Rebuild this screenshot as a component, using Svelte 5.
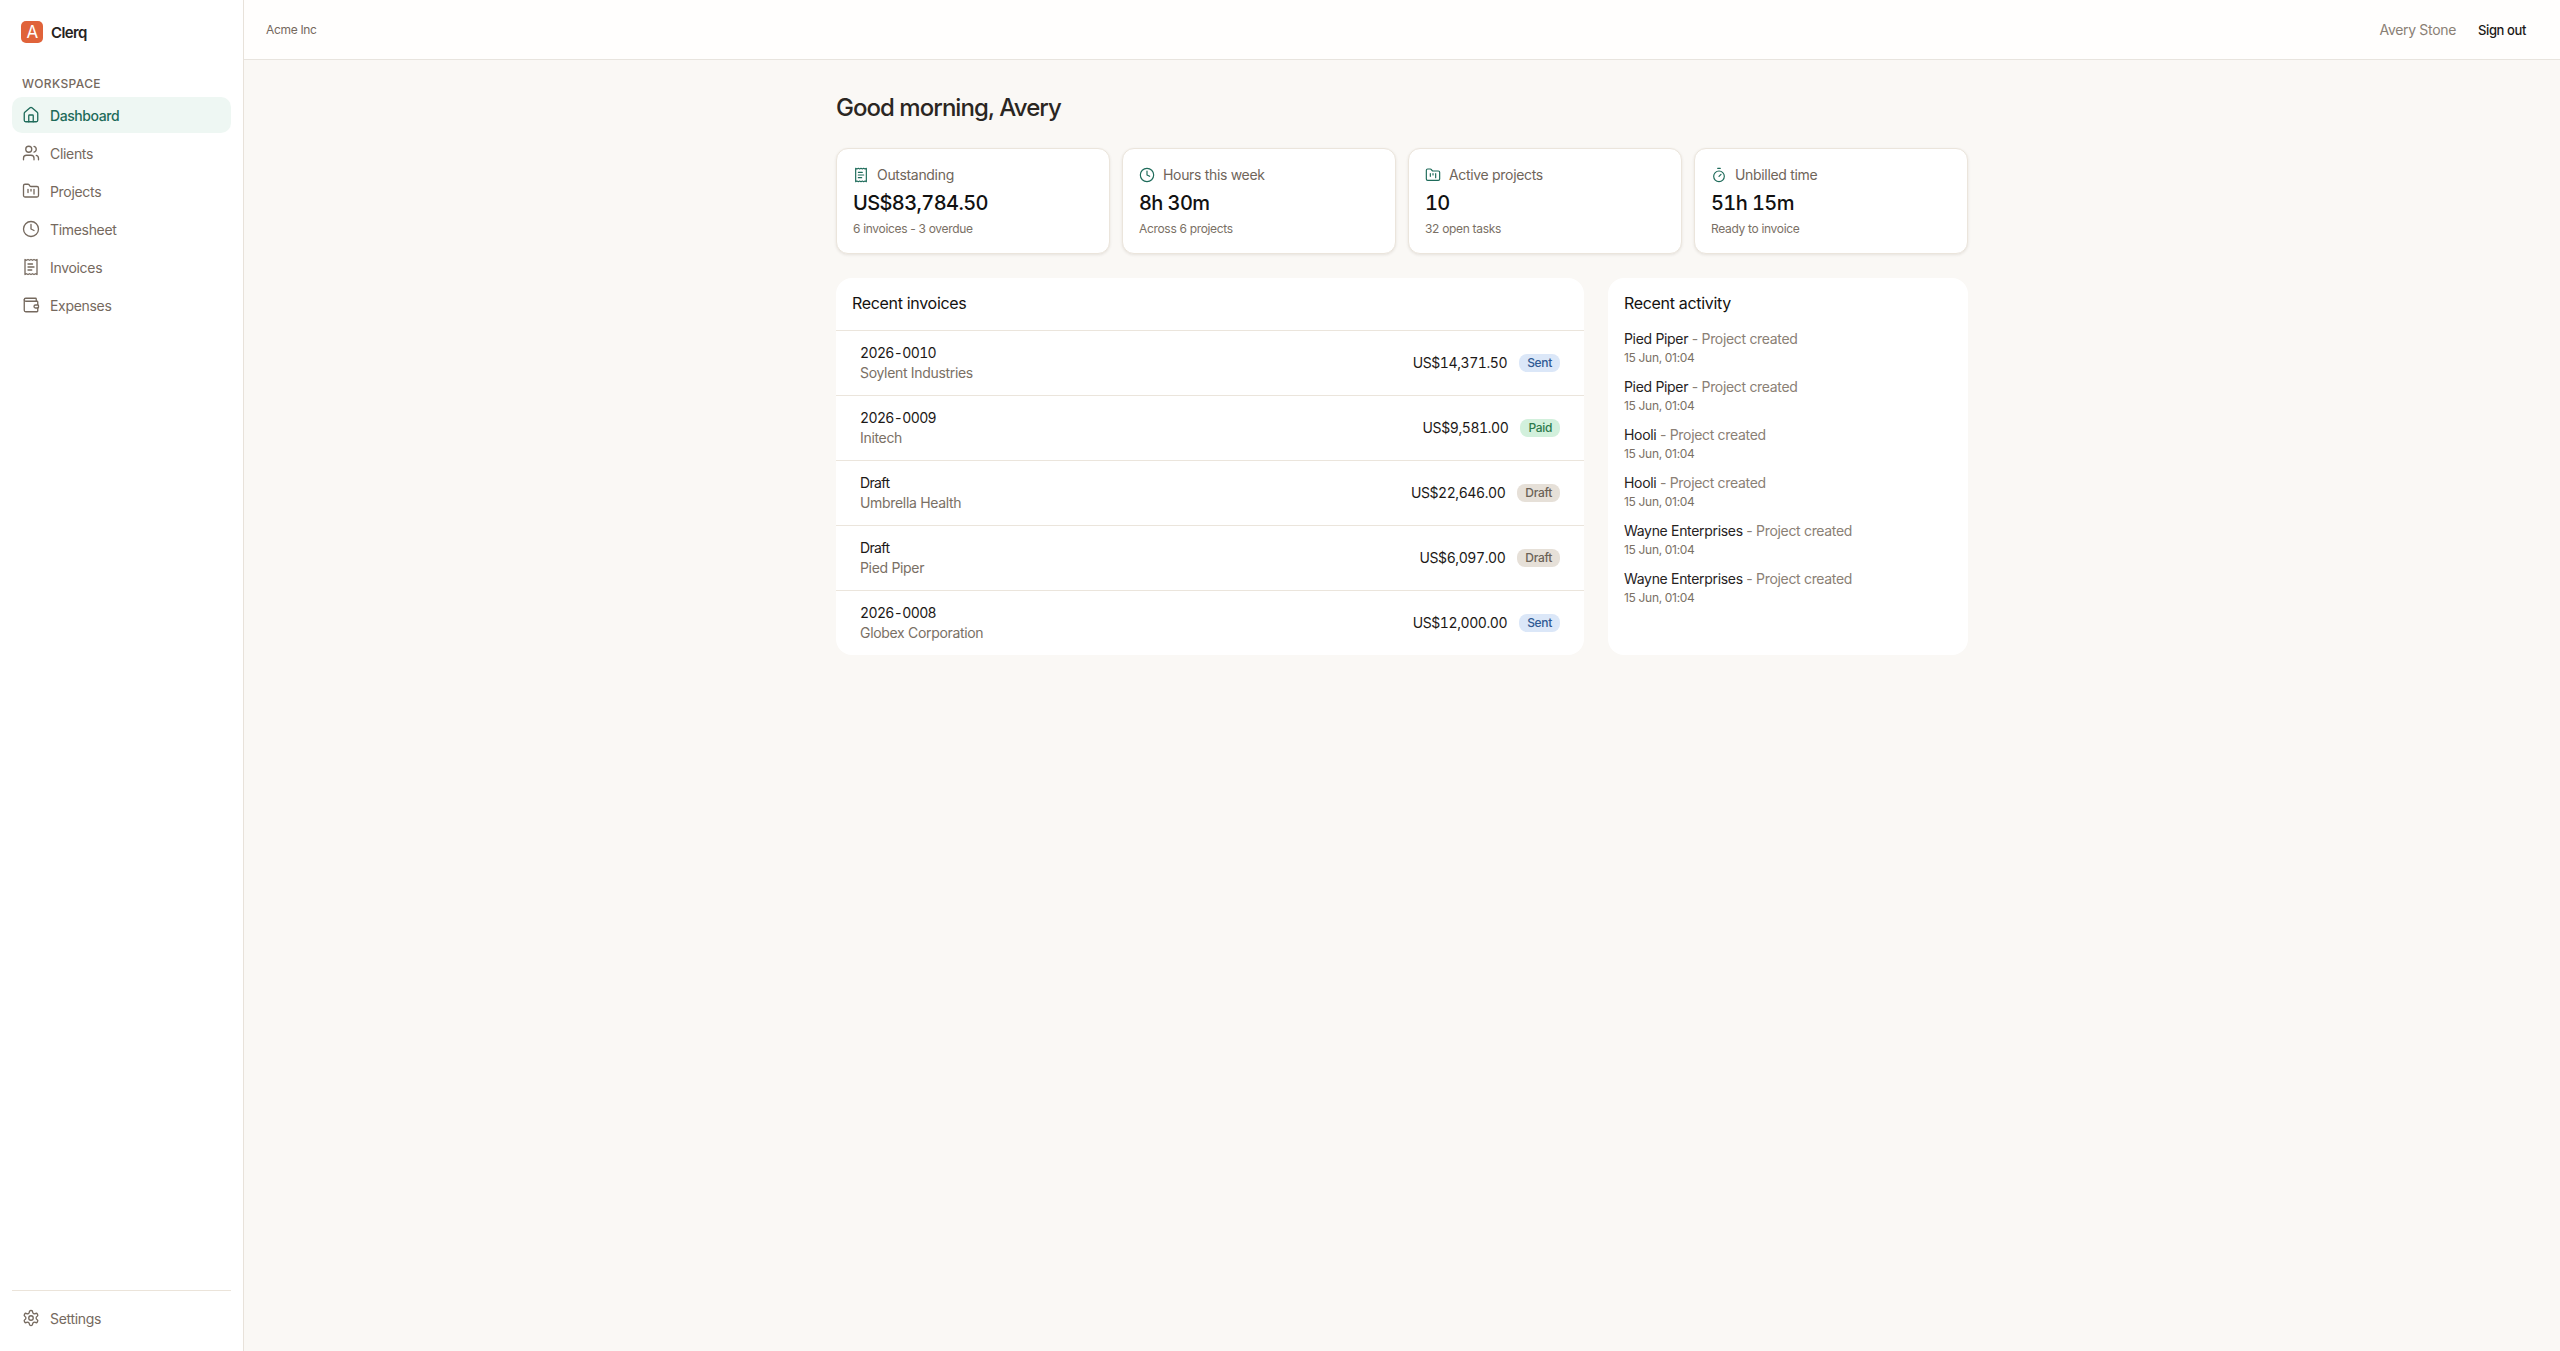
<script lang="ts">
  const icons: Record<string, string> = {
    house: '<path d="M15 21v-8a1 1 0 0 0-1-1h-4a1 1 0 0 0-1 1v8"/><path d="M3 10a2 2 0 0 1 .709-1.528l7-5.999a2 2 0 0 1 2.582 0l7 5.999A2 2 0 0 1 21 10v9a2 2 0 0 1-2 2H5a2 2 0 0 1-2-2z"/>',
    users: '<path d="M16 21v-2a4 4 0 0 0-4-4H6a4 4 0 0 0-4 4v2"/><path d="M16 3.128a4 4 0 0 1 0 7.744"/><path d="M22 21v-2a4 4 0 0 0-3-3.87"/><circle cx="9" cy="7" r="4"/>',
    folder: '<path d="M4 20h16a2 2 0 0 0 2-2V8a2 2 0 0 0-2-2h-7.93a2 2 0 0 1-1.66-.9l-.82-1.2A2 2 0 0 0 7.93 3H4a2 2 0 0 0-2 2v13c0 1.1.9 2 2 2Z"/><path d="M8 10v4"/><path d="M12 10v2"/><path d="M16 10v6"/>',
    clock: '<circle cx="12" cy="12" r="10"/><path d="M12 6v6l4 2"/>',
    receipt: '<path d="M4 2v20l2-1 2 1 2-1 2 1 2-1 2 1 2-1 2 1V2l-2 1-2-1-2 1-2-1-2 1-2-1-2 1Z"/><path d="M14 8H8"/><path d="M16 12H8"/><path d="M13 16H8"/>',
    wallet: '<path d="M19 7V4a1 1 0 0 0-1-1H5a2 2 0 0 0 0 4h15a1 1 0 0 1 1 1v4h-3a2 2 0 0 0 0 4h3a1 1 0 0 0 1-1v-2a1 1 0 0 0-1-1"/><path d="M3 5v14a2 2 0 0 0 2 2h15a1 1 0 0 0 1-1v-4"/>',
    timer: '<line x1="10" x2="14" y1="2" y2="2"/><line x1="12" x2="15" y1="14" y2="11"/><circle cx="12" cy="14" r="8"/>',
    settings: '<path d="M12.22 2h-.44a2 2 0 0 0-2 2v.18a2 2 0 0 1-1 1.73l-.43.25a2 2 0 0 1-2 0l-.15-.08a2 2 0 0 0-2.73.73l-.22.38a2 2 0 0 0 .73 2.73l.15.1a2 2 0 0 1 1 1.72v.51a2 2 0 0 1-1 1.74l-.15.09a2 2 0 0 0-.73 2.73l.22.38a2 2 0 0 0 2.73.73l.15-.08a2 2 0 0 1 2 0l.43.25a2 2 0 0 1 1 1.73V20a2 2 0 0 0 2 2h.44a2 2 0 0 0 2-2v-.18a2 2 0 0 1 1-1.73l.43-.25a2 2 0 0 1 2 0l.15.08a2 2 0 0 0 2.73-.73l.22-.39a2 2 0 0 0-.73-2.73l-.15-.08a2 2 0 0 1-1-1.74v-.5a2 2 0 0 1 1-1.74l.15-.09a2 2 0 0 0 .73-2.73l-.22-.38a2 2 0 0 0-2.73-.73l-.15.08a2 2 0 0 1-2 0l-.43-.25a2 2 0 0 1-1-1.73V4a2 2 0 0 0-2-2z"/><circle cx="12" cy="12" r="3"/>'
  };

  const nav = [
    { label: "Dashboard", icon: "house", active: true },
    { label: "Clients", icon: "users" },
    { label: "Projects", icon: "folder" },
    { label: "Timesheet", icon: "clock" },
    { label: "Invoices", icon: "receipt" },
    { label: "Expenses", icon: "wallet" }
  ];

  const stats = [
    { label: "Outstanding", icon: "receipt", value: "US$83,784.50", sub: "6 invoices - 3 overdue" },
    { label: "Hours this week", icon: "clock", value: "8h 30m", sub: "Across 6 projects" },
    { label: "Active projects", icon: "folder", value: "10", sub: "32 open tasks" },
    { label: "Unbilled time", icon: "timer", value: "51h 15m", sub: "Ready to invoice" }
  ];

  const invoices = [
    { number: "2026-0010", client: "Soylent Industries", amount: "US$14,371.50", status: "Sent" },
    { number: "2026-0009", client: "Initech", amount: "US$9,581.00", status: "Paid" },
    { number: "Draft", client: "Umbrella Health", amount: "US$22,646.00", status: "Draft" },
    { number: "Draft", client: "Pied Piper", amount: "US$6,097.00", status: "Draft" },
    { number: "2026-0008", client: "Globex Corporation", amount: "US$12,000.00", status: "Sent" }
  ];

  const activity = ["Pied Piper", "Pied Piper", "Hooli", "Hooli", "Wayne Enterprises", "Wayne Enterprises"];
</script>

{#snippet icon(name: string, size: number)}
  <svg width={size} height={size} viewBox="0 0 24 24" fill="none" stroke="currentColor" stroke-width="1.75" stroke-linecap="round" stroke-linejoin="round">{@html icons[name]}</svg>
{/snippet}

<div class="shell">
  <aside class="sidebar">
    <div class="brand">
      <div class="logo">A</div>
      <span>Clerq</span>
    </div>
    <div class="section">Workspace</div>
    <nav>
      {#each nav as item}
        <div class="nav-item" class:active={item.active}>
          {@render icon(item.icon, 18)}
          <span>{item.label}</span>
        </div>
      {/each}
    </nav>
    <div class="sidebar-foot">
      <div class="nav-item">
        {@render icon("settings", 18)}
        <span>Settings</span>
      </div>
    </div>
  </aside>

  <div class="body">
    <header class="topbar">
      <span class="org">Acme Inc</span>
      <div class="user">
        <span class="name">Avery Stone</span>
        <span class="signout">Sign out</span>
      </div>
    </header>

    <main>
      <div class="content">
        <h1>Good morning, Avery</h1>

        <div class="stats">
          {#each stats as stat}
            <div class="stat">
              <div class="stat-label">
                {@render icon(stat.icon, 16)}
                <span>{stat.label}</span>
              </div>
              <div class="stat-value">{stat.value}</div>
              <div class="stat-sub">{stat.sub}</div>
            </div>
          {/each}
        </div>

        <div class="panels">
          <section class="panel">
            <h2 class="invoices-title">Recent invoices</h2>
            {#each invoices as inv}
              <div class="row">
                <div>
                  <div class="inv-number">{inv.number}</div>
                  <div class="inv-client">{inv.client}</div>
                </div>
                <div class="inv-right">
                  <span class="amount">{inv.amount}</span>
                  <span class="badge {inv.status.toLowerCase()}">{inv.status}</span>
                </div>
              </div>
            {/each}
          </section>

          <section class="panel activity">
            <h2>Recent activity</h2>
            <ul>
              {#each activity as who}
                <li>
                  <div class="act-line"><span class="who">{who}</span> - Project created</div>
                  <div class="act-date">15 Jun, 01:04</div>
                </li>
              {/each}
            </ul>
          </section>
        </div>
      </div>
    </main>
  </div>
</div>

<style>
  :global(body) {
    margin: 0;
    background: #faf8f5;
    font-family: "Inter", "Open Sans", sans-serif;
    color: #1c1917;
  }

  .shell {
    display: flex;
    height: 100vh;
    letter-spacing: -0.02em;
  }

  .sidebar {
    width: 219px;
    flex-shrink: 0;
    background: #fff;
    border-right: 1px solid #e8e2da;
    display: flex;
    flex-direction: column;
    padding: 0 12px;
  }

  .brand {
    display: flex;
    align-items: center;
    gap: 8px;
    height: 22px;
    padding: 21px 9px 0;
    font-size: 15px;
    font-weight: 600;
    letter-spacing: -0.04em;
    color: #26221e;
  }

  .logo {
    width: 22px;
    height: 22px;
    border-radius: 5px;
    background: #e0633a;
    color: #fff;
    font-size: 17px;
    font-weight: 400;
    text-align: center;
    line-height: 23px;
  }

  .section {
    margin-top: 33px;
    padding-left: 10px;
    font-size: 12px;
    line-height: 16px;
    font-weight: 500;
    text-transform: uppercase;
    letter-spacing: 0.03em;
    color: #75695e;
  }

  nav {
    margin-top: 5px;
    display: flex;
    flex-direction: column;
    gap: 2px;
  }

  .nav-item {
    display: flex;
    align-items: center;
    gap: 10px;
    height: 36px;
    padding: 0 10px;
    border-radius: 10px;
    font-size: 14px;
    color: #75695e;
  }

  .nav-item.active {
    background: #eef7f3;
    color: #1e6b5a;
    font-weight: 500;
    letter-spacing: -0.03em;
  }

  .sidebar-foot {
    margin-top: auto;
    border-top: 1px solid #ebe4da;
    padding: 9px 0 15px;
  }

  .body {
    flex: 1;
    min-width: 0;
    display: flex;
    flex-direction: column;
  }

  .topbar {
    height: 59px;
    flex-shrink: 0;
    background: #fffefd;
    border-bottom: 1px solid #e8e4de;
    display: flex;
    align-items: center;
    justify-content: space-between;
    padding: 0 34px 0 22px;
    font-size: 14px;
  }

  .org {
    font-size: 12px;
    color: #75695e;
  }

  .user {
    display: flex;
    gap: 22px;
    align-items: center;
  }

  .name {
    color: #8a8075;
  }

  .signout {
    font-size: 13px;
    font-weight: 500;
    letter-spacing: -0.03em;
    color: #1c1917;
  }

  main {
    flex: 1;
    padding: 32px 0;
  }

  .content {
    width: 1132px;
    margin: 0 auto;
  }

  h1 {
    margin: 0 0 24px;
    font-size: 24px;
    line-height: 32px;
    font-weight: 500;
    letter-spacing: -0.04em;
    color: #2a2622;
  }

  .stats {
    display: grid;
    grid-template-columns: repeat(4, 1fr);
    gap: 12px;
  }

  .stat {
    background: #fff;
    border: 1px solid #ebe5dc;
    border-radius: 12px;
    padding: 16px;
    box-shadow: 0 1px 3px rgba(60, 40, 20, 0.1);
  }

  .stat-label {
    display: flex;
    align-items: center;
    gap: 8px;
    font-size: 14px;
    line-height: 20px;
    color: #6f655a;
  }

  .stat-label svg {
    color: #1e6b5a;
  }

  .stat-value {
    margin-top: 4px;
    font-size: 20px;
    line-height: 28px;
    font-weight: 500;
    font-variant-numeric: tabular-nums;
    letter-spacing: -0.03em;
    color: #111;
  }

  .stat-sub {
    margin-top: 4px;
    font-size: 12px;
    line-height: 16px;
    color: #7a7065;
  }

  .panels {
    margin-top: 24px;
    display: grid;
    grid-template-columns: 1fr 360px;
    gap: 24px;
  }

  .panel {
    background: #fff;
    border-radius: 16px;
  }

  h2 {
    margin: 0;
    font-size: 16px;
    line-height: 20px;
    font-weight: 400;
    color: #141210;
  }

  .invoices-title {
    padding: 15px 16px 17px;
    border-bottom: 1px solid #ebe5dc;
    height: 20px;
  }

  .row {
    display: flex;
    align-items: center;
    justify-content: space-between;
    padding: 12px 24px;
    border-top: 1px solid #ebe5dc;
    font-size: 14px;
    line-height: 20px;
  }

  .row:first-of-type {
    border-top: none;
  }

  .inv-number {
    font-variant-numeric: tabular-nums;
    letter-spacing: -0.045em;
  }

  .inv-client {
    color: #7a7065;
  }

  .inv-right {
    display: flex;
    align-items: center;
    gap: 12px;
  }

  .amount {
    font-variant-numeric: tabular-nums;
    letter-spacing: -0.03em;
  }

  .badge {
    font-size: 12px;
    line-height: 18px;
    font-weight: 500;
    padding: 0 8px;
    border-radius: 8px;
  }

  .sent { background: #dbe7f8; color: #2f5a94; }
  .paid { background: #d2f0dc; color: #2c7a4b; }
  .draft { background: #e6e0d8; color: #6b6257; }

  .activity {
    padding: 15px 16px 16px;
  }

  ul {
    list-style: none;
    margin: 16px 0 0;
    padding: 0;
    display: flex;
    flex-direction: column;
    gap: 12px;
  }

  .act-line {
    font-size: 14px;
    line-height: 20px;
    color: #8a8075;
  }

  .who {
    color: #26221e;
  }

  .act-date {
    font-size: 12px;
    line-height: 16px;
    padding-top: 1px;
    margin-bottom: -1px;
    color: #7a7065;
  }
</style>
